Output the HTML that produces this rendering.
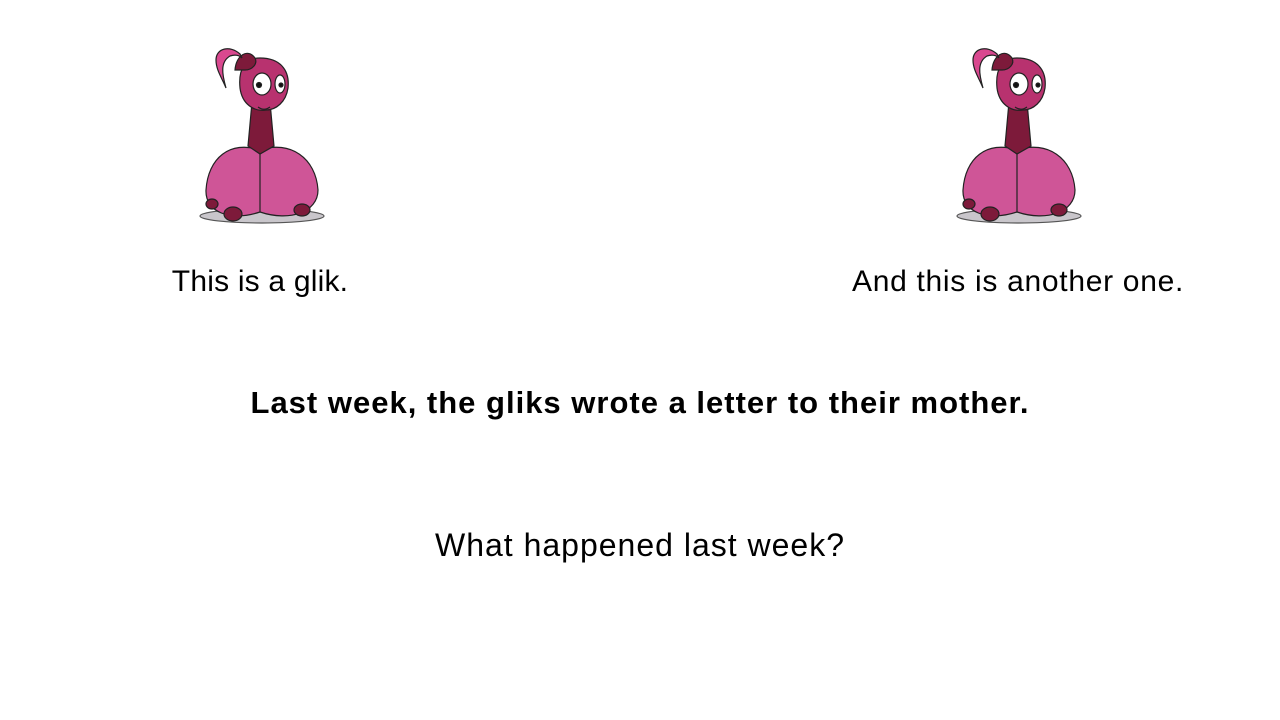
<!DOCTYPE html>
<html><head><meta charset="utf-8"><style>
html,body{margin:0;padding:0;background:#fff;width:1280px;height:720px;overflow:hidden;position:relative;font-family:"Liberation Sans",sans-serif;color:#000}
.t{position:absolute;white-space:nowrap;transform:translateX(-50%)}
svg{position:absolute}
</style></head><body>
<svg width="145" height="190" viewBox="0 0 145 190" style="left:190px;top:40px" id="g1">
<g stroke="#222" stroke-width="1.2">
<ellipse cx="72" cy="176" rx="62" ry="7" fill="#c9c6cb" stroke="#555"/>
<path d="M70 110 C40 100 18 118 16 150 C15 172 40 182 70 172 C100 182 128 172 128 150 C126 118 100 100 70 110 Z" fill="#cf5597"/>
<path d="M70 110 L70 172" fill="none"/>
<path d="M62 62 L80 62 L84 106 L70 114 L58 106 Z" fill="#7d1a3a"/>
<path d="M50 48 C48 28 56 18 70 18 C90 18 100 30 98 48 C96 62 86 70 76 70 C64 72 52 64 50 48 Z" fill="#b8326f"/>
<ellipse cx="43" cy="174" rx="9" ry="7" fill="#7d1a3a"/>
<ellipse cx="112" cy="170" rx="8" ry="6" fill="#7d1a3a"/>
<ellipse cx="22" cy="164" rx="6" ry="5" fill="#7d1a3a"/>
<path d="M45 30 C46 15 58 8 65 18 C68 24 62 30 55 30 Z" fill="#7d1a3a"/>
<path d="M50 14 C40 5 26 8 26 20 C26 30 32 38 36 48 C32 34 30 22 40 16 C46 14 50 16 52 18 Z" fill="#d9488f"/>
<ellipse cx="72" cy="44" rx="9" ry="11" fill="#fff"/>
<ellipse cx="90" cy="44" rx="5" ry="9" fill="#fff"/>
<circle cx="69" cy="45" r="2.5" fill="#111"/>
<circle cx="91" cy="45" r="2" fill="#111"/>
<path d="M68 67 C72 70 76 70 80 67" fill="none"/>
</g>
</svg>
<svg width="145" height="190" viewBox="0 0 145 190" style="left:947px;top:40px"><use href="#g1"/></svg>
<div class="t" style="left:260px;top:265px;font-size:30px;letter-spacing:0.2px">This is a glik.</div>
<div class="t" style="left:1018px;top:265px;font-size:30px;letter-spacing:0.7px">And this is another one.</div>
<div class="t" style="left:640px;top:385px;font-size:31px;font-weight:bold;letter-spacing:1px">Last week, the gliks wrote a letter to their mother.</div>
<div class="t" style="left:640px;top:527px;font-size:32px;letter-spacing:1px">What happened last week?</div>
</body></html>
